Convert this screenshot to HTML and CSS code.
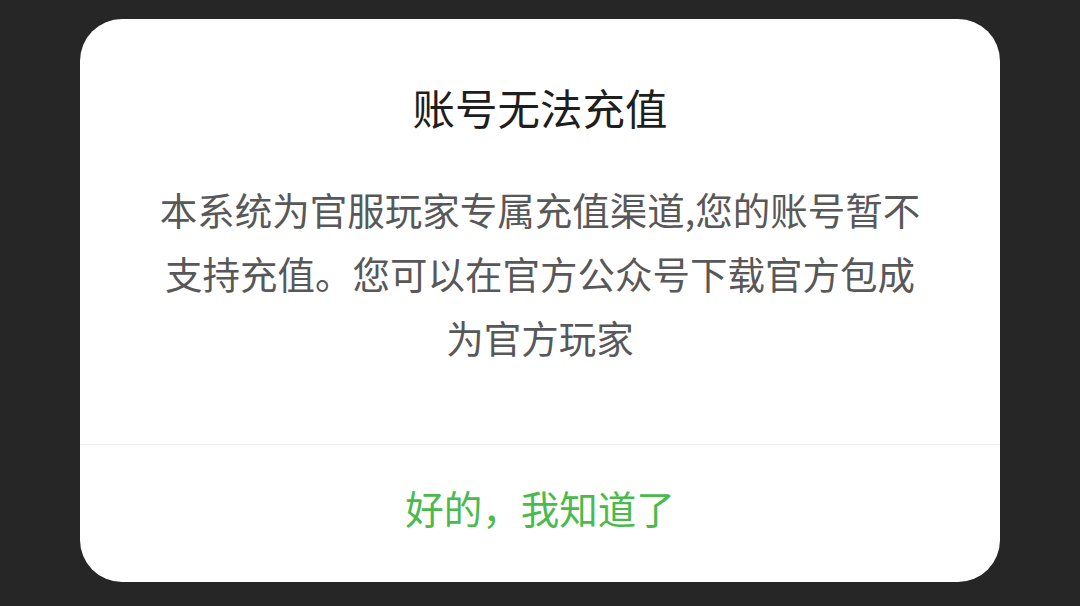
FILE: index.html
```html
<!DOCTYPE html>
<html lang="zh-CN">
<head>
<meta charset="utf-8">
<link rel="stylesheet" href="styles.css">
</head>
<body>
<div class="dialog">
  <div class="dialog-main">
    <div class="dialog-title">账号无法充值</div>
    <div class="dialog-text">本系统为官服玩家专属充值渠道,您的账号暂不支持充值。您可以在官方公众号下载官方包成为官方玩家</div>
  </div>
  <div class="dialog-footer">
    <div class="dialog-btn">好的，我知道了</div>
  </div>
</div>
</body>
</html>
```
FILE: styles.css
```css
html, body {
  margin: 0;
  padding: 0;
  background: #262626;
  width: 1080px;
  height: 606px;
  overflow: hidden;
  font-family: "Noto Sans CJK SC", "Noto Sans", sans-serif;
}
body {
  padding-top: 19px;
  box-sizing: border-box;
}
.dialog {
  margin-left: 80px;
  width: 920px;
  height: 563px;
  background: #fff;
  border-radius: 42px;
  display: flex;
  flex-direction: column;
  overflow: hidden;
}
.dialog-main {
  padding: 60px 70px 0;
  height: 426px;
  box-sizing: border-box;
  border-bottom: 1px solid #f0f0f0;
  text-align: center;
}
.dialog-title {
  font-size: 42.5px;
  line-height: 56px;
  color: #1e1e1e;
}
.dialog-text {
  margin-top: 42px;
  font-size: 37.5px;
  line-height: 64px;
  color: #585858;
}
.dialog-footer {
  flex: 1;
  display: flex;
  align-items: center;
  justify-content: center;
  padding-bottom: 14px;
}
.dialog-btn {
  font-size: 38.5px;
  line-height: 50px;
  color: #4aba4c;
}
```
